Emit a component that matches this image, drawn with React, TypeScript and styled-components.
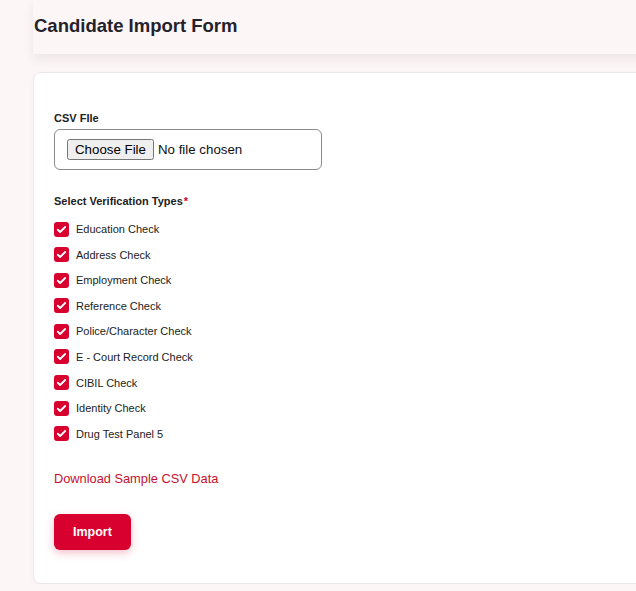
import React, { useState } from 'react';
import styled, { createGlobalStyle } from 'styled-components';

const GlobalStyle = createGlobalStyle`
  html, body {
    margin: 0;
    padding: 0;
    background: #fcf6f7;
    font-family: "Liberation Sans", Arial, sans-serif;
    color: #222;
    overflow-x: hidden;
  }
`;

const Page = styled.div`
  padding-left: 33px;
  width: calc(100% + 20px);
  box-sizing: border-box;
`;

const Header = styled.header`
  height: 54px;
  display: flex;
  align-items: center;
  background: #fcf6f7;
  box-shadow: 0 5px 10px rgba(60, 30, 40, 0.08);
  position: relative;

  h1 {
    margin: 0 0 2px 1px;
    font-size: 18.5px;
    font-weight: 700;
    color: #24222a;
  }
`;

const Card = styled.section`
  margin-top: 18px;
  background: #fff;
  border: 1px solid #ece8e9;
  border-radius: 8px;
  box-shadow: 0 2px 6px rgba(0, 0, 0, 0.04);
  padding: 38px 20px 33px;
  display: flex;
  flex-direction: column;
  align-items: flex-start;
`;

const FieldLabel = styled.div`
  font-size: 11px;
  font-weight: 700;
  color: #222;
  line-height: 14px;
  margin-bottom: ${p => p.$gap ?? 4}px;

  span { color: #d4002d; margin-left: 1px; }
`;

const FileBox = styled.label`
  width: 268px;
  height: 41px;
  box-sizing: border-box;
  border: 1px solid #8a8a8a;
  border-radius: 6px;
  display: flex;
  align-items: center;
  padding: 0 12px;
  margin-bottom: 24px;

  input {
    font-family: "Liberation Sans", Arial, sans-serif;
    font-size: 13.3px;
    color: #111;
  }
`;

const CheckList = styled.div`
  display: flex;
  flex-direction: column;
  gap: 9.6px;
  margin-top: 13px;
`;

const CheckRow = styled.label`
  display: flex;
  align-items: center;
  gap: 7px;
  font-size: 11px;
  color: #222;
  cursor: pointer;
  height: 16px;
`;

const Box = styled.span`
  width: 15px;
  height: 15px;
  border-radius: 3px;
  background: ${p => (p.$on ? '#d7002e' : '#fff')};
  border: ${p => (p.$on ? 'none' : '1px solid #999')};
  display: flex;
  align-items: center;
  justify-content: center;
  box-sizing: border-box;
`;

const DownloadLink = styled.a`
  margin-top: 29px;
  font-size: 12.8px;
  color: #c8102e;
  text-decoration: none;
  cursor: pointer;
`;

const ImportButton = styled.button`
  margin-top: 28px;
  height: 36px;
  padding: 0 19px;
  border: none;
  border-radius: 6px;
  background: #d7002e;
  color: #fff;
  font-family: "Liberation Sans", Arial, sans-serif;
  font-size: 12.5px;
  font-weight: 700;
  box-shadow: 0 3px 8px rgba(215, 0, 46, 0.25);
  cursor: pointer;
`;

const checks = [
  'Education Check',
  'Address Check',
  'Employment Check',
  'Reference Check',
  'Police/Character Check',
  'E - Court Record Check',
  'CIBIL Check',
  'Identity Check',
  'Drug Test Panel 5',
];

const Tick = () => (
  <svg width="11" height="11" viewBox="0 0 24 24" fill="none" stroke="#fff" strokeWidth="4" strokeLinecap="round" strokeLinejoin="round">
    <path d="M4 12.5l5 5L20 6.5" />
  </svg>
);

export default function App() {
  const [picked, setPicked] = useState<boolean[]>(checks.map(() => true));

  const toggle = (i: number) =>
    setPicked(prev => prev.map((v, j) => (j === i ? !v : v)));

  return (
    <>
      <GlobalStyle />
      <Page>
        <Header>
          <h1>Candidate Import Form</h1>
        </Header>

        <Card>
          <FieldLabel>CSV FIle</FieldLabel>
          <FileBox>
            <input type="file" accept=".csv" />
          </FileBox>

          <FieldLabel $gap={0}>
            Select Verification Types<span>*</span>
          </FieldLabel>
          <CheckList>
            {checks.map((c, i) => (
              <CheckRow key={c} onClick={() => toggle(i)}>
                <Box $on={picked[i]}>{picked[i] && <Tick />}</Box>
                {c}
              </CheckRow>
            ))}
          </CheckList>

          <DownloadLink>Download Sample CSV Data</DownloadLink>
          <ImportButton>Import</ImportButton>
        </Card>
      </Page>
    </>
  );
}
